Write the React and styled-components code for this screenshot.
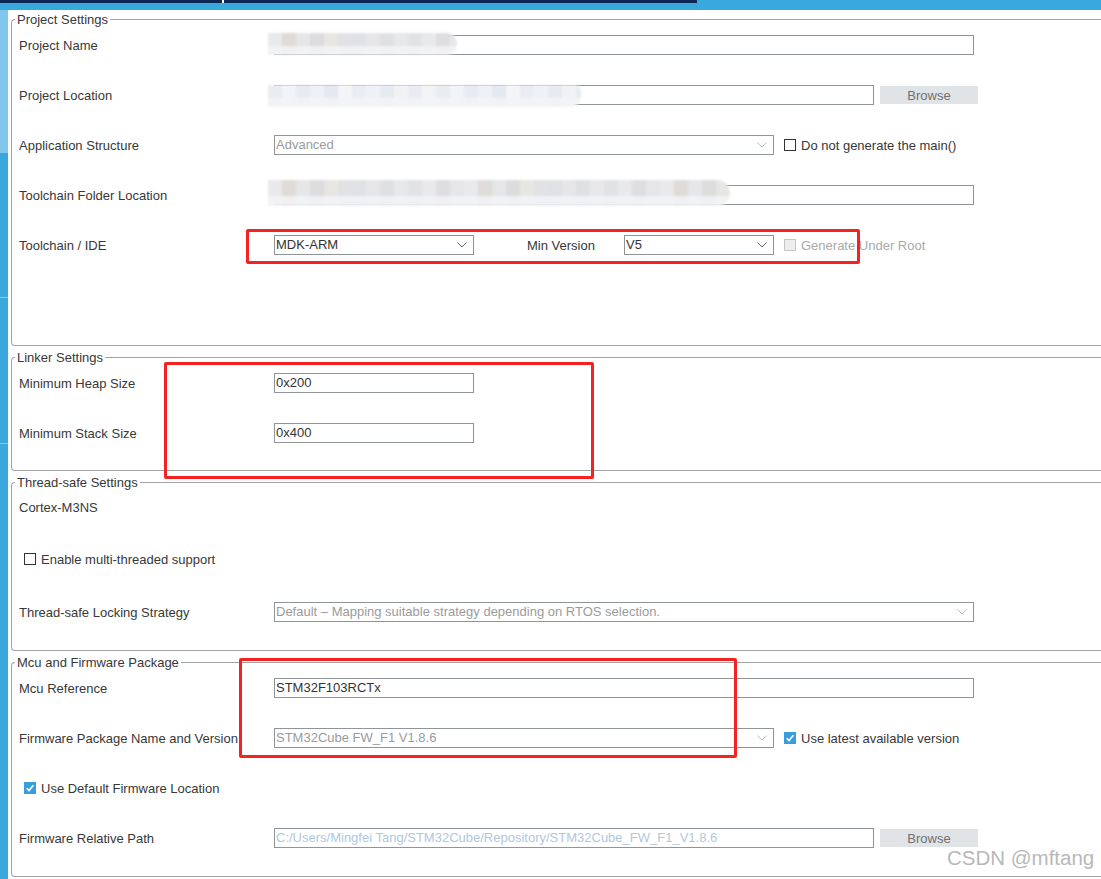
import React from 'react';
import styled, { createGlobalStyle } from 'styled-components';

const GlobalStyle = createGlobalStyle`
  html, body {
    margin: 0;
    padding: 0;
    background: #fff;
    overflow: hidden;
  }
  body {
    font-family: "Liberation Sans", Arial, sans-serif;
  }
`;

// build a pixel-mosaic strip for the redacted fields
const mosaic = (colors, step) =>
  `linear-gradient(to right, ${colors
    .map((c, i) => `${c} ${i * step}px ${(i + 1) * step}px`)
    .join(', ')})`;

const Page = styled.div`
  position: relative;
  width: 1101px;
  height: 879px;
  overflow: hidden;
  background: #fff;
  font-family: "Liberation Sans", Arial, sans-serif;
  font-size: 13px;
  color: #383838;
`;

const TopBar = styled.div`
  display: flex;
  flex-direction: column;
  height: 10px;
`;

const NavRow = styled.div`
  display: flex;
  height: 3px;
`;

const NavSeg = styled.div`
  flex: ${p => (p.$w ? 'none' : 1)};
  width: ${p => (p.$w ? `${p.$w}px` : 'auto')};
  background: ${p => p.$c};
`;

const BlueBand = styled.div`
  height: 7px;
  background: #39a8dc;
`;

const Body = styled.div`
  display: flex;
  height: 869px;
`;

const SideStrip = styled.div`
  width: 8px;
  flex: none;
  display: flex;
  flex-direction: column;
`;

const StripSeg = styled.div`
  flex: ${p => (p.$h ? 'none' : 1)};
  height: ${p => (p.$h ? `${p.$h}px` : 'auto')};
  background: ${p => p.$c};
  border-bottom: ${p => (p.$line ? '1px solid #86cbee' : 'none')};
`;

const Main = styled.div`
  flex: 1;
  display: flex;
  flex-direction: column;
  gap: 11px;
  padding: 9px 0 0 3px;
`;

const Section = styled.div`
  position: relative;
  border: 1px solid #a3a3a3;
  border-right: none;
  border-radius: 4px 0 0 4px;
  padding-bottom: ${p => p.$pb}px;
`;

const Legend = styled.div`
  width: fit-content;
  margin: -8px 0 -7px 3px;
  padding: 0 2px;
  background: #fff;
  line-height: 15px;
`;

const Row = styled.div`
  display: flex;
  align-items: center;
  height: ${p => p.$h || 50}px;
  padding-left: 7px;
  white-space: nowrap;
`;

const Label = styled.div`
  width: 255px;
  flex: none;
`;

const InlineLabel = styled.div`
  width: 97px;
  flex: none;
  margin-left: 53px;
`;

const toneColor = {
  normal: '#333',
  muted: '#9b9b9b',
  path: '#b2c6de',
};

const Field = styled.div`
  position: relative;
  box-sizing: border-box;
  display: flex;
  align-items: center;
  flex: none;
  width: ${p => p.$w}px;
  height: 20px;
  padding: 0 1px;
  border: 1px solid #8f9499;
  background: #fff;
  color: ${p => toneColor[p.$tone || 'normal']};
  line-height: 18px;
`;

const ChevronIcon = styled.svg`
  margin-left: auto;
  margin-right: 5px;
  flex: none;
`;

const Chevron = ({ color }) => (
  <ChevronIcon width="10" height="6" viewBox="0 0 10 6">
    <polyline points="0.5,0.5 5,5 9.5,0.5" fill="none" stroke={color} strokeWidth="1" />
  </ChevronIcon>
);

const Browse = styled.div`
  box-sizing: border-box;
  width: 98px;
  height: 18px;
  margin-left: 6px;
  display: flex;
  align-items: center;
  justify-content: center;
  background: #e1e4e7;
  color: #707070;
`;

const CheckWrap = styled.div`
  display: flex;
  align-items: center;
  gap: 5px;
  margin-left: ${p => p.$ml || 0}px;
  color: ${p => (p.$disabled ? '#a9a9a9' : 'inherit')};
`;

const Box = styled.span`
  box-sizing: border-box;
  display: inline-flex;
  align-items: center;
  justify-content: center;
  width: 12px;
  height: 12px;
  flex: none;
  border: 1px solid
    ${p => (p.$state === 'on' ? '#3a9edd' : p.$state === 'disabled' ? '#c6c6c6' : '#333')};
  background: ${p => (p.$state === 'on' ? '#3a9edd' : p.$state === 'disabled' ? '#ededed' : '#fff')};
`;

const Check = ({ state, ml, children }) => (
  <CheckWrap $ml={ml} $disabled={state === 'disabled'}>
    <Box $state={state}>
      {state === 'on' && (
        <svg width="10" height="10" viewBox="0 0 10 10">
          <polyline points="1.8,5.2 4,7.5 8.4,2.2" fill="none" stroke="#fff" strokeWidth="1.6" />
        </svg>
      )}
    </Box>
    {children}
  </CheckWrap>
);

// privacy mosaic over the path fields
const Redact = styled.div`
  position: absolute;
  left: ${p => p.$x}px;
  top: ${p => p.$y}px;
  width: ${p => p.$w}px;
  height: ${p => p.$h}px;
  background: linear-gradient(to bottom, transparent 60%, rgba(243, 244, 247, 0.85) 60%),
    ${p => p.$bg};
  border-radius: ${p => p.$r || '0'};
  filter: blur(1.2px);
`;

// red annotation frames drawn on top of the screenshot
const Mark = styled.div`
  position: absolute;
  left: ${p => p.$x}px;
  top: ${p => p.$y}px;
  width: ${p => p.$w}px;
  height: ${p => p.$h}px;
  box-sizing: border-box;
  border: 3px solid #f52222;
  border-radius: 2px;
  pointer-events: none;
`;

const Watermark = styled.div`
  position: absolute;
  left: 947px;
  top: 847px;
  font-size: 20.5px;
  line-height: 22px;
  color: #b8b8b8;
  white-space: nowrap;
  text-shadow: 0 0 1px #fff;
`;

const grayTiles = [
  '#e9e9eb', '#dedbd8', '#e6e6e8', '#dcdcdd', '#e7e6e3', '#e2e2e4', '#e0e1e5',
  '#e6e6e8', '#dfe0e2', '#e8e8ea', '#e1e2e4', '#e9e9eb', '#dedee0', '#e6e6e8',
];
const blueTiles = [
  '#e9ecf1', '#f1f4f8', '#e7ebf2', '#eef1f6', '#e4e9f1', '#f3f5f8', '#e9edf3',
  '#eef1f5', '#e6ebf2', '#f0f2f6', '#e8ecf2', '#f2f4f7',
];

const App = () => {
  return (
    <Page>
      <GlobalStyle />
      <TopBar>
        <NavRow>
          <NavSeg $w={222} $c="#0b2752" />
          <NavSeg $w={2} $c="#ffffff" />
          <NavSeg $w={473} $c="#0b2752" />
          <NavSeg $c="#39a8dc" />
        </NavRow>
        <BlueBand />
      </TopBar>

      <Body>
        <SideStrip>
          <StripSeg $h={143} $c="#80c7eb" />
          <StripSeg $h={144} $c="#3aa8dc" $line />
          <StripSeg $h={145} $c="#3aa8dc" $line />
          <StripSeg $c="#3aa8dc" />
        </SideStrip>

        <Main>
          <Section $pb={75}>
            <Legend>Project Settings</Legend>
            <Row>
              <Label>Project Name</Label>
              <Field $w={700}>
                <Redact $x={-7} $y={-3} $w={189} $h={22} $r="0 10px 10px 0" $bg={mosaic(grayTiles, 14)} />
              </Field>
            </Row>
            <Row>
              <Label>Project Location</Label>
              <Field $w={600}>
                <Redact
                  $x={-7}
                  $y={-1}
                  $w={313}
                  $h={22}
                  $r="0 6px 10px 0"
                  $bg={mosaic([...blueTiles, ...blueTiles], 14)}
                />
              </Field>
              <Browse>Browse</Browse>
            </Row>
            <Row>
              <Label>Application Structure</Label>
              <Field $w={500} $tone="muted">
                Advanced
                <Chevron color="#bdbdbd" />
              </Field>
              <Check state="off" ml={10}>Do not generate the main()</Check>
            </Row>
            <Row>
              <Label>Toolchain Folder Location</Label>
              <Field $w={700}>
                <Redact
                  $x={-7}
                  $y={-6}
                  $w={462}
                  $h={26}
                  $r="0 14px 14px 0"
                  $bg={mosaic([...grayTiles, ...grayTiles, ...grayTiles], 14)}
                />
              </Field>
            </Row>
            <Row>
              <Label>Toolchain / IDE</Label>
              <Field $w={200}>
                MDK-ARM
                <Chevron color="#666" />
              </Field>
              <InlineLabel>Min Version</InlineLabel>
              <Field $w={150}>
                V5
                <Chevron color="#666" />
              </Field>
              <Check state="disabled" ml={10}>Generate Under Root</Check>
            </Row>
          </Section>

          <Section $pb={12}>
            <Legend>Linker Settings</Legend>
            <Row>
              <Label>Minimum Heap Size</Label>
              <Field $w={200}>0x200</Field>
            </Row>
            <Row>
              <Label>Minimum Stack Size</Label>
              <Field $w={200}>0x400</Field>
            </Row>
          </Section>

          <Section $pb={13}>
            <Legend>Thread-safe Settings</Legend>
            <Row $h={48}>Cortex-M3NS</Row>
            <Row $h={56}>
              <Check state="off" ml={5}>Enable multi-threaded support</Check>
            </Row>
            <Row>
              <Label>Thread-safe Locking Strategy</Label>
              <Field $w={700} $tone="muted">
                Default – Mapping suitable strategy depending on RTOS selection.
                <Chevron color="#bdbdbd" />
              </Field>
            </Row>
          </Section>

          <Section $pb={13}>
            <Legend>Mcu and Firmware Package</Legend>
            <Row>
              <Label>Mcu Reference</Label>
              <Field $w={700}>STM32F103RCTx</Field>
            </Row>
            <Row>
              <Label>Firmware Package Name and Version</Label>
              <Field $w={500} $tone="muted">
                STM32Cube FW_F1 V1.8.6
                <Chevron color="#bdbdbd" />
              </Field>
              <Check state="on" ml={10}>Use latest available version</Check>
            </Row>
            <Row>
              <Check state="on" ml={5}>Use Default Firmware Location</Check>
            </Row>
            <Row>
              <Label>Firmware Relative Path</Label>
              <Field $w={600} $tone="path">
                C:/Users/Mingfei Tang/STM32Cube/Repository/STM32Cube_FW_F1_V1.8.6
              </Field>
              <Browse>Browse</Browse>
            </Row>
          </Section>
        </Main>
      </Body>

      <Mark $x={246} $y={229} $w={614} $h={35} />
      <Mark $x={164} $y={362} $w={430} $h={117} />
      <Mark $x={239} $y={658} $w={498} $h={100} />
      <Watermark>CSDN @mftang</Watermark>
    </Page>
  );
};

export default App;
